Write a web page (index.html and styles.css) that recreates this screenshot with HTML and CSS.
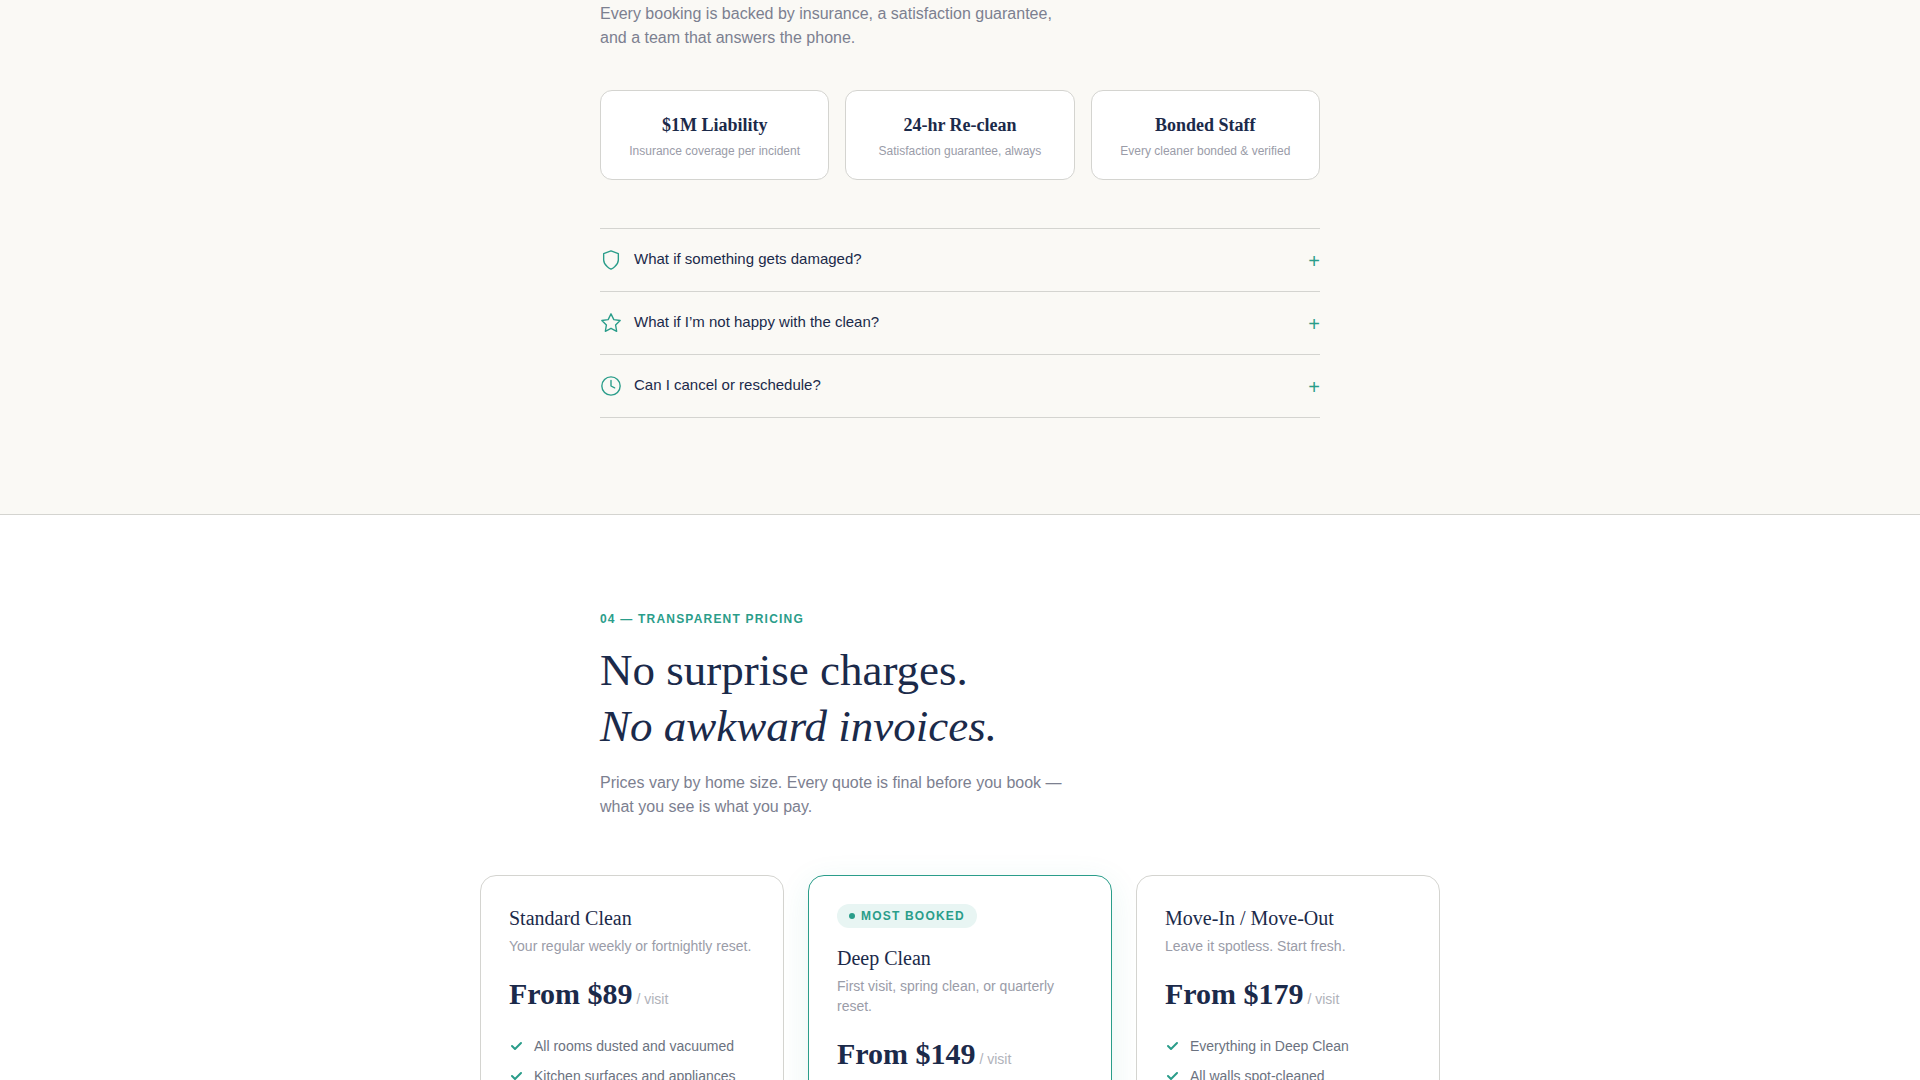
FILE: index.html
```html
<!DOCTYPE html>
<html lang="en">
<head>
  <meta charset="UTF-8">
  <meta name="viewport" content="width=device-width, initial-scale=1.0">
  <title>Home Cleaning</title>
  <link rel="stylesheet" href="styles.css">
</head>
<body>
  <section class="section trust">
    <div class="container">
      <p class="lead">Every booking is backed by insurance, a satisfaction guarantee, and a team that answers the phone.</p>

      <div class="trust-grid">
        <div class="trust-card">
          <h3>$1M Liability</h3>
          <p>Insurance coverage per incident</p>
        </div>
        <div class="trust-card">
          <h3>24-hr Re-clean</h3>
          <p>Satisfaction guarantee, always</p>
        </div>
        <div class="trust-card">
          <h3>Bonded Staff</h3>
          <p>Every cleaner bonded &amp; verified</p>
        </div>
      </div>

      <div class="faq">
        <button class="faq-item" type="button" aria-expanded="false">
          <svg class="faq-icon" viewBox="0 0 24 24" aria-hidden="true"><path d="M12 22s8-4 8-10V5l-8-3-8 3v7c0 6 8 10 8 10z"/></svg>
          <span class="faq-question">What if something gets damaged?</span>
          <span class="faq-plus">+</span>
        </button>
        <button class="faq-item" type="button" aria-expanded="false">
          <svg class="faq-icon" viewBox="0 0 24 24" aria-hidden="true"><path d="M12 2l3.09 6.26L22 9.27l-5 4.87 1.18 6.88L12 17.77l-6.18 3.25L7 14.14 2 9.27l6.91-1.01z"/></svg>
          <span class="faq-question">What if I’m not happy with the clean?</span>
          <span class="faq-plus">+</span>
        </button>
        <button class="faq-item" type="button" aria-expanded="false">
          <svg class="faq-icon" viewBox="0 0 24 24" aria-hidden="true"><circle cx="12" cy="12" r="10"/><path d="M12 6v6l4 2"/></svg>
          <span class="faq-question">Can I cancel or reschedule?</span>
          <span class="faq-plus">+</span>
        </button>
      </div>
    </div>
  </section>

  <section class="section pricing">
    <div class="container">
      <p class="eyebrow">04 — Transparent pricing</p>
      <h2>No surprise charges.<br><em>No awkward invoices.</em></h2>
      <p class="lead">Prices vary by home size. Every quote is final before you book — what you see is what you pay.</p>
    </div>

    <div class="plans">
      <article class="plan">
        <h3>Standard Clean</h3>
        <p class="plan-desc">Your regular weekly or fortnightly reset.</p>
        <p class="price">From $89<span> / visit</span></p>
        <ul>
          <li><svg viewBox="0 0 16 16" aria-hidden="true"><path d="M3 8l3 3 6-6"/></svg>All rooms dusted and vacuumed</li>
          <li><svg viewBox="0 0 16 16" aria-hidden="true"><path d="M3 8l3 3 6-6"/></svg>Kitchen surfaces and appliances</li>
        </ul>
      </article>

      <article class="plan featured">
        <span class="badge">Most booked</span>
        <h3>Deep Clean</h3>
        <p class="plan-desc">First visit, spring clean, or quarterly reset.</p>
        <p class="price">From $149<span> / visit</span></p>
      </article>

      <article class="plan">
        <h3>Move-In / Move-Out</h3>
        <p class="plan-desc">Leave it spotless. Start fresh.</p>
        <p class="price">From $179<span> / visit</span></p>
        <ul>
          <li><svg viewBox="0 0 16 16" aria-hidden="true"><path d="M3 8l3 3 6-6"/></svg>Everything in Deep Clean</li>
          <li><svg viewBox="0 0 16 16" aria-hidden="true"><path d="M3 8l3 3 6-6"/></svg>All walls spot-cleaned</li>
        </ul>
      </article>
    </div>
  </section>
</body>
</html>
```
FILE: styles.css
```css
:root {
  --navy: #1b2a4a;
  --green: #2a9d8a;
  --green-light: #e8f5f3;
  --cream: #faf9f5;
  --border: #d4d4d0;
  --text: #6b7280;
  --text-mid: #7c8090;
  --text-soft: #9a9ca8;
  --serif: "Liberation Serif", Georgia, serif;
  --sans: "Liberation Sans", Arial, sans-serif;
}
* {
  box-sizing: border-box;
  margin: 0;
  padding: 0;
}
html {
  height: 100%;
  overflow: hidden;
}
body {
  height: 100%;
  overflow: hidden;
  font-family: var(--sans);
  font-size: 16px;
  line-height: 24px;
  color: var(--navy);
  background: #fff;
}
.section {
  padding: 96px 24px;
}
.container {
  max-width: 720px;
  margin: 0 auto;
}
.lead {
  max-width: 480px;
  color: var(--text-mid);
}

/* trust */
.trust {
  padding-top: 2px;
  background: var(--cream);
  border-bottom: 1px solid var(--border);
}
.trust-grid {
  display: grid;
  grid-template-columns: repeat(3, 1fr);
  gap: 16px;
  margin: 40px 0 48px;
}
.trust-card {
  padding: 20px;
  text-align: center;
  background: #fff;
  border: 1px solid var(--border);
  border-radius: 12px;
}
.trust-card h3 {
  margin-bottom: 4px;
  font: bold 18px/28px var(--serif);
}
.trust-card p {
  font-size: 12px;
  line-height: 16px;
  color: var(--text-soft);
}
.faq {
  border-top: 1px solid var(--border);
}
.faq-item {
  display: flex;
  align-items: flex-start;
  gap: 12px;
  width: 100%;
  padding: 20px 0 18px;
  font: 15px/20px var(--sans);
  color: var(--navy);
  text-align: left;
  background: none;
  border: none;
  border-bottom: 1px solid var(--border);
  cursor: pointer;
}
.faq-icon {
  width: 22px;
  height: 22px;
  fill: none;
  stroke: var(--green);
  stroke-width: 1.5;
  stroke-linecap: round;
  stroke-linejoin: round;
}
.faq-question {
  flex: 1;
}
.faq-plus {
  font-size: 20px;
  line-height: 24px;
  color: var(--green);
}

/* pricing */
.eyebrow {
  margin-bottom: 15px;
  font-size: 12px;
  font-weight: bold;
  line-height: 16px;
  letter-spacing: 0.1em;
  text-transform: uppercase;
  color: var(--green);
}
.pricing h2 {
  margin-bottom: 17px;
  font: 45px/56px var(--serif);
}
.plans {
  display: grid;
  grid-template-columns: repeat(3, 1fr);
  gap: 24px;
  max-width: 960px;
  margin: 56px auto 0;
}
.plan {
  padding: 28px;
  background: #fff;
  border: 1px solid var(--border);
  border-radius: 16px;
}
.plan h3 {
  margin-bottom: 4px;
  font: 20px/28px var(--serif);
}
.plan-desc {
  font-size: 14px;
  line-height: 20px;
  color: var(--text-soft);
}
.price {
  margin: 18px 0 20px;
  font: bold 30px/40px var(--serif);
}
.price span {
  font: 14px var(--sans);
  color: #b0b2ba;
}
.plan ul {
  list-style: none;
}
.plan li {
  display: flex;
  align-items: center;
  gap: 9px;
  padding: 2px 0;
  margin-bottom: 6px;
  font-size: 14px;
  line-height: 20px;
  color: var(--text);
}
.plan li svg {
  width: 16px;
  height: 16px;
  fill: none;
  stroke: var(--green);
  stroke-width: 2;
  stroke-linecap: round;
  stroke-linejoin: round;
}
.featured {
  border-color: var(--green);
  box-shadow: 0 8px 32px rgba(42, 157, 138, 0.1);
}
.badge {
  display: flex;
  align-items: center;
  gap: 6px;
  width: fit-content;
  margin-bottom: 16px;
  padding: 3px 12px;
  font-size: 12px;
  font-weight: bold;
  line-height: 18px;
  letter-spacing: 0.1em;
  text-transform: uppercase;
  color: var(--green);
  background: var(--green-light);
  border-radius: 12px;
}
.badge::before {
  content: "";
  width: 6px;
  height: 6px;
  background: var(--green);
  border-radius: 50%;
}
```
